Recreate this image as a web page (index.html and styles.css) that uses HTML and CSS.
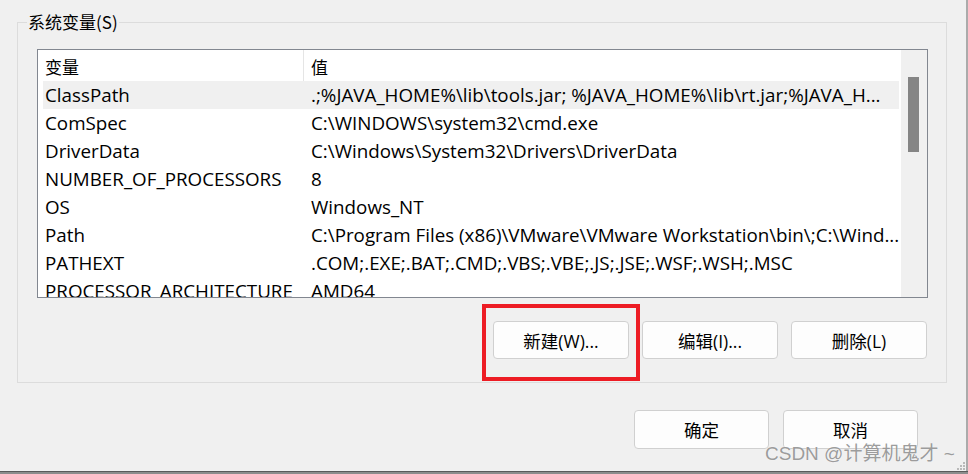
FILE: index.html
```html
<!DOCTYPE html>
<html lang="zh-CN">
<head>
<meta charset="utf-8">
<title>系统变量</title>
<link rel="stylesheet" href="styles.css">
</head>
<body>
<div class="window">
  <div class="dialog">
    <section class="group">
      <span class="group-title">系统变量(S)</span>
      <div class="listbox">
        <div class="list-main">
          <div class="row header">
            <div class="cell c1">变量</div>
            <div class="cell c2">值</div>
          </div>
          <div class="row selected">
            <div class="cell c1">ClassPath</div>
            <div class="cell c2">.;%JAVA_HOME%\lib\tools.jar; %JAVA_HOME%\lib\rt.jar;%JAVA_H...</div>
          </div>
          <div class="row">
            <div class="cell c1">ComSpec</div>
            <div class="cell c2">C:\WINDOWS\system32\cmd.exe</div>
          </div>
          <div class="row">
            <div class="cell c1">DriverData</div>
            <div class="cell c2">C:\Windows\System32\Drivers\DriverData</div>
          </div>
          <div class="row">
            <div class="cell c1">NUMBER_OF_PROCESSORS</div>
            <div class="cell c2">8</div>
          </div>
          <div class="row">
            <div class="cell c1">OS</div>
            <div class="cell c2">Windows_NT</div>
          </div>
          <div class="row">
            <div class="cell c1">Path</div>
            <div class="cell c2">C:\Program Files (x86)\VMware\VMware Workstation\bin\;C:\Wind...</div>
          </div>
          <div class="row">
            <div class="cell c1">PATHEXT</div>
            <div class="cell c2">.COM;.EXE;.BAT;.CMD;.VBS;.VBE;.JS;.JSE;.WSF;.WSH;.MSC</div>
          </div>
          <div class="row">
            <div class="cell c1">PROCESSOR_ARCHITECTURE</div>
            <div class="cell c2">AMD64</div>
          </div>
        </div>
        <div class="scrollbar"><div class="thumb"></div></div>
      </div>
      <div class="actions">
        <div class="btn-wrap">
          <button class="btn">新建(W)...</button>
          <span class="highlight-box"></span>
        </div>
        <button class="btn">编辑(I)...</button>
        <button class="btn">删除(L)</button>
      </div>
    </section>
    <div class="footer">
      <button class="btn">确定</button>
      <button class="btn">取消</button>
    </div>
  </div>
  <div class="edge-right"></div>
  <div class="edge-bottom"></div>
  <div class="watermark">CSDN @计算机鬼才 ~</div>
  <svg class="grip" width="10" height="10" viewBox="0 0 10 10">
    <g fill="#b9b9b9">
      <rect x="7" y="1" width="2" height="2"/>
      <rect x="4" y="4" width="2" height="2"/>
      <rect x="7" y="4" width="2" height="2"/>
      <rect x="1" y="7" width="2" height="2"/>
      <rect x="4" y="7" width="2" height="2"/>
      <rect x="7" y="7" width="2" height="2"/>
    </g>
  </svg>
</div>
</body>
</html>
```

FILE: styles.css
```css
* { box-sizing: border-box; }

html, body {
  margin: 0;
  padding: 0;
  background: #f0f0f0;
}

body {
  font-family: "Open Sans", "Noto Sans CJK SC", sans-serif;
  font-size: 18.8px;
  color: #000;
}

.window {
  position: relative;
  width: 968px;
  height: 474px;
  overflow: hidden;
  background: #f0f0f0;
}

.dialog {
  display: flex;
  flex-direction: column;
  padding: 0 21px 0 17px;
}

.group {
  position: relative;
  margin-top: 22px;
  border: 1px solid #dcdcdc;
  padding: 26px 0 23px 19px;
}

.group-title {
  position: absolute;
  top: -12px;
  left: 9px;
  padding: 0 1px;
  line-height: 22px;
  background: #f0f0f0;
  font-family: "Noto Sans CJK SC", sans-serif;
  font-size: 17px;
  color: #000;
}

.listbox {
  display: flex;
  width: 891px;
  height: 249px;
  border: 1px solid #828790;
  background: #fff;
  overflow: hidden;
}

.list-main {
  width: 863px;
  padding-left: 5px;
  padding-right: 2px;
}

.row {
  display: flex;
  height: 28px;
  align-items: center;
  white-space: nowrap;
  line-height: 24px;
}

.row.header {
  height: 31px;
  align-items: stretch;
}

.row.header .cell {
  display: flex;
  align-items: center;
  font-family: "Noto Sans CJK SC", sans-serif;
  font-size: 17px;
  padding-top: 2px;
}

.row.header .c1 {
  border-right: 1px solid #e5e5e5;
}

.row.selected {
  background: #f0f0f0;
}

.cell {
  overflow: hidden;
}

.c1 {
  width: 261px;
  padding-left: 2px;
}

.c2 {
  flex: 1;
  padding-left: 7px;
}

.scrollbar {
  width: 26px;
  background: #f0f0f0;
  padding: 27px 0 0 7px;
}

.thumb {
  width: 11px;
  height: 75px;
  background: #858585;
}

.actions {
  display: flex;
  justify-content: flex-end;
  gap: 13px;
  margin-top: 23px;
  padding-right: 19px;
}

.btn-wrap {
  position: relative;
  display: flex;
}

.btn {
  width: 136px;
  height: 38px;
  padding: 0;
  border: 1px solid #d0d0d0;
  border-radius: 4px;
  background: #fdfdfd;
  font-family: "Open Sans", "Noto Sans CJK SC", sans-serif;
  font-size: 17.5px;
  color: #000;
}

.highlight-box {
  position: absolute;
  left: -11px;
  top: -17px;
  width: 158px;
  height: 77px;
  border: 4px solid #ed1c24;
}

.footer {
  display: flex;
  justify-content: flex-end;
  gap: 14px;
  margin-top: 27px;
  padding-right: 29px;
}

.footer .btn {
  width: 135px;
  height: 39px;
}

.edge-right {
  position: absolute;
  top: 0;
  right: 0;
  width: 2px;
  height: 100%;
  background: #ababab;
}

.edge-bottom {
  position: absolute;
  left: 0;
  bottom: 0;
  width: 100%;
  height: 3px;
  background: #8c8c8c;
  border-top: 1px solid #5a5a5a;
}

.watermark {
  position: absolute;
  left: 765px;
  top: 442px;
  font-family: "Liberation Sans", "Noto Sans CJK SC", sans-serif;
  font-size: 19px;
  line-height: 24px;
  color: rgba(130, 130, 130, 0.8);
  text-shadow: 0 0 1px rgba(255, 255, 255, 0.8);
  white-space: nowrap;
}

.grip {
  position: absolute;
  right: 2px;
  bottom: 3px;
}
```
